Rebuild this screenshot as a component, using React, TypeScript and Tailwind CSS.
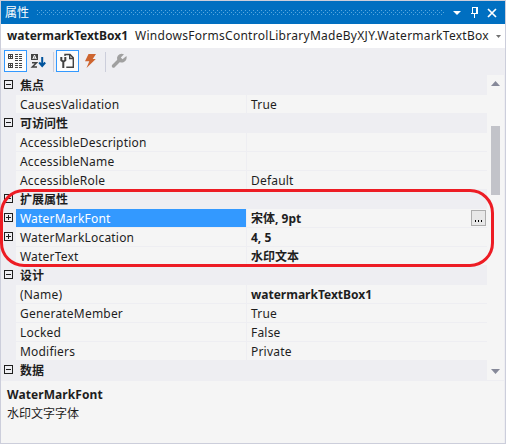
import React from 'react';

type Item = {
  label: string;
  value?: string;
  category?: boolean;
  expandable?: boolean;
  selected?: boolean;
  bold?: boolean;
};

const items: Item[] = [
  { label: '焦点', category: true },
  { label: 'CausesValidation', value: 'True' },
  { label: '可访问性', category: true },
  { label: 'AccessibleDescription' },
  { label: 'AccessibleName' },
  { label: 'AccessibleRole', value: 'Default' },
  { label: '扩展属性', category: true },
  { label: 'WaterMarkFont', value: '宋体, 9pt', expandable: true, selected: true, bold: true },
  { label: 'WaterMarkLocation', value: '4, 5', expandable: true, bold: true },
  { label: 'WaterText', value: '水印文本', bold: true },
  { label: '设计', category: true },
  { label: '(Name)', value: 'watermarkTextBox1', bold: true },
  { label: 'GenerateMember', value: 'True' },
  { label: 'Locked', value: 'False' },
  { label: 'Modifiers', value: 'Private' },
  { label: '数据', category: true },
];

function Toggle({ plus }: { plus?: boolean }) {
  return (
    <svg width="9" height="9" shapeRendering="crispEdges" className="block shrink-0" fill="none" stroke="#1e1e1e">
      <path d="M.5.5h8v8h-8zM2 4.5h5" />
      {plus && <path d="M4.5 2v5" />}
    </svg>
  );
}

function Row({ item }: { item: Item }) {
  if (item.category) {
    return (
      <div className="flex h-[19px] pl-[3px]">
        <div className="w-4 pt-1"><Toggle /></div>
        <div className="text-[12px] font-bold leading-[19px]">{item.label}</div>
      </div>
    );
  }
  return (
    <div className="flex h-[19px]">
      <div className="w-[15px] pt-1 pl-[3px]">{item.expandable && <Toggle plus />}</div>
      <div className={`mb-px w-[230px] pl-1 leading-[19px] tracking-[0.2px] ${item.selected ? 'bg-[#3399ff] text-white' : 'bg-[#f5f5f5]'}`}>
        {item.label}
      </div>
      <div className={`relative mb-px ml-px flex-1 bg-[#f5f5f5] pl-1 leading-[19px] ${item.bold ? 'font-bold' : 'tracking-[0.2px]'}`}>
        {item.value}
        {item.selected && (
          <button className="absolute top-px right-px flex h-4 w-[15px] items-end justify-center gap-[2px] border border-[#adadad] bg-[#e8e8e8] pb-[3px]">
            <i className="h-[2px] w-px bg-black" />
            <i className="h-[2px] w-px bg-black" />
            <i className="h-[2px] w-px bg-black" />
          </button>
        )}
      </div>
    </div>
  );
}

function TitleBar() {
  return (
    <div className="flex h-[23px] items-center bg-[#006fc1] pl-1 text-white">
      <span className="w-[32px] text-[12px]">属性</span>
      <svg width="408" height="5" shapeRendering="crispEdges">
        <defs>
          <pattern id="grip" width="4" height="4" patternUnits="userSpaceOnUse">
            <path d="M0 0h1v1H0zM2 2h1v1H2z" fill="#59a8de" />
          </pattern>
        </defs>
        <rect width="407" height="5" fill="url(#grip)" />
      </svg>
      <svg width="60" height="23" className="block" fill="none" stroke="white">
        <path d="M8 10h8l-4 4z" fill="white" stroke="none" />
        <path d="M27.5 12V6.5h5V12M31.5 6v6M26 12.5h7M29.5 13v4" shapeRendering="crispEdges" />
        <path d="M43 8l8 8M51 8l-8 8" strokeWidth="1.7" />
      </svg>
    </div>
  );
}

function Toolbar() {
  return (
    <div className="h-[27px]">
      <svg width="140" height="27" className="block">
        <g fill="#fcfcfc" stroke="#3399ff" shapeRendering="crispEdges">
          <path d="M3.5 2.5h22v21h-22zM55.5 2.5h22v21h-22z" />
        </g>
        <g shapeRendering="crispEdges" fill="none" stroke="#424242">
          <path d="M7.5 6.5h4v4h-4zM8 8.5h3M9.5 7v3M7.5 15.5h4v4h-4zM8 17.5h3M9.5 16v3" />
          <path d="M14 6.5h3M18 6.5h3M14 8.5h3M18 8.5h3M14 10.5h3M18 10.5h3M14 12.5h3M18 12.5h3M14 15.5h3M18 15.5h3M14 17.5h3M18 17.5h3M14 19.5h3M18 19.5h3" />
          <path d="M52.5 4v20M104.5 4v20" stroke="#ccceDB" />
        </g>
        <path d="M30 6h7v6h-7z" fill="#424242" />
        <path d="M31.8 11l1.7-4 1.7 4M32.2 10h2.6" fill="none" stroke="#fff" />
        <path d="M31 14.8h4.5L31.3 19H36" fill="none" stroke="#424242" strokeWidth="1.5" />
        <path d="M41.2 9v9M38.2 14.5l3 3.5 3-3.5" fill="none" stroke="#00539c" strokeWidth="2" />
        <g fill="none" stroke="#424242" strokeWidth="1.4">
          <path d="M64 8V6.5h5l3.3 3.4v9.4h-7M68.7 6.5v4h3.6" />
          <path d="M60.3 9v3.3l2 1.5 2-1.5V9M62.3 13v7" strokeWidth="2" />
        </g>
        <path d="M87.5 6H95l-3.3 5h3.1L85.5 20l2.8-6.7H84z" fill="#ce6530" />
        <path d="M112.5 18l6-6" stroke="#a0a0a0" strokeWidth="3.5" strokeLinecap="round" />
        <path d="M123 6.3l-3.2 3.2 1.7 1.7L125.4 8a5 5 0 0 1-5.4 6.5 4.7 4.7 0 0 1-4-4.7A4.7 4.7 0 0 1 123 6.3z" fill="#a0a0a0" />
      </svg>
    </div>
  );
}

export default function App() {
  return (
    <div className="relative flex h-[444px] w-[506px] flex-col border border-[#ccceDB] bg-[#eeeef2] font-['Noto_Sans','Noto_Sans_CJK_SC',sans-serif] text-[12px] whitespace-nowrap text-[#1e1e1e]">
      <TitleBar />
      <div className="flex h-6 items-center bg-white pl-[6px]">
        <span className="w-[128px] font-bold">watermarkTextBox1</span>
        <span className="w-[361px] tracking-[0.28px]">WindowsFormsControlLibraryMadeByXJY.WatermarkTextBox</span>
        <svg width="5" height="3"><path d="M0 0h5L2.5 3z" fill="#717171" /></svg>
      </div>
      <Toolbar />
      <div className="flex h-[306px]">
        <div className="w-[486px] pt-px">
          {items.map((item) => <Row key={item.label} item={item} />)}
        </div>
        <div className="flex h-[305px] w-[17px] flex-col items-center bg-[#f5f5f5] pt-[6px] pb-[6px]">
          <svg width="9" height="5" className="shrink-0"><path d="M0 5h9L4.5 0z" fill="#868999" /></svg>
          <div className="mt-10 h-[69px] w-[9px] bg-[#c2c3c9]" />
          <svg width="9" height="5" className="mt-auto shrink-0"><path d="M0 0h9L4.5 5z" fill="#868999" /></svg>
        </div>
      </div>
      <div className="mr-px flex-1 bg-[#f5f5f5] pt-[5px] pl-[6px]">
        <div className="leading-[18px] font-bold tracking-[0.08px]">WaterMarkFont</div>
        <div className="leading-[20px]">水印文字字体</div>
      </div>
      <div className="absolute top-[188px] left-[-1px] h-[78px] w-[494px] rounded-[24px] border-[3px] border-[#ed1c24]" />
    </div>
  );
}
